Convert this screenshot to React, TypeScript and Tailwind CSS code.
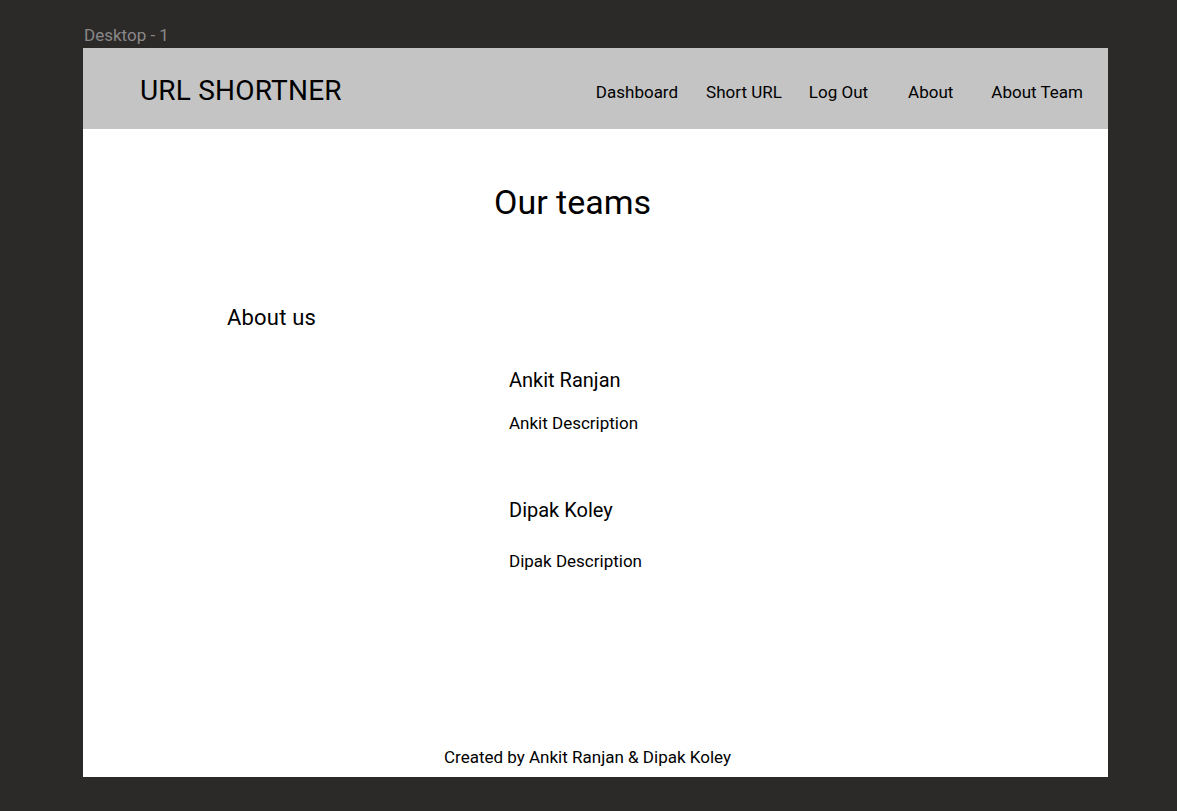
import React from 'react';

const NAV = [
  { label: 'Dashboard', cls: '' },
  { label: 'Short URL', cls: 'ml-[28px]' },
  { label: 'Log Out', cls: 'ml-[27px]' },
  { label: 'About', cls: 'ml-[40px]' },
  { label: 'About Team', cls: 'ml-[38px]' },
];

const TEAM = [
  { name: 'Ankit Ranjan', desc: 'Ankit Description', nameGap: 'mt-[34px]', descGap: 'mt-[17px]' },
  { name: 'Dipak Koley', desc: 'Dipak Description', nameGap: 'mt-[61px]', descGap: 'mt-[25px]' },
];

export default function App() {
  return (
    <div className="min-h-screen w-full bg-[#2c2929] pl-[83px] font-['Roboto',sans-serif]">
      <div className="h-[48px] flex items-end pb-[3px] pl-[1px] text-[17px] leading-[20px] text-[#8a8888]">Desktop - 1</div>

      <div className="w-[1025px] h-[729px] bg-white flex flex-col text-black">
        {/* Header */}
        <header className="h-[81px] bg-[#c4c4c4] flex items-center pl-[57px] pr-[25px]">
          <h1 className="pt-[4px] text-[28px] leading-[32px] font-normal tracking-[0.2px]">URL SHORTNER</h1>
          <nav className="ml-auto flex items-center pt-[6px] text-[17px] leading-[24px]">
            {NAV.map(n => (
              <span key={n.label} className={n.cls}>{n.label}</span>
            ))}
          </nav>
        </header>

        {/* Content */}
        <main className="flex flex-col">
          <h2 className="mt-[52px] pl-[411px] text-[34px] leading-[42px] font-normal">Our teams</h2>
          <h3 className="mt-[81px] pl-[144px] text-[22px] leading-[28px] font-normal tracking-[0.2px]">About us</h3>
          <div className="pl-[426px] flex flex-col">
            {TEAM.map(m => (
              <div key={m.name} className="flex flex-col">
                <p className={`${m.nameGap} text-[20px] leading-[28px]`}>{m.name}</p>
                <p className={`${m.descGap} text-[17px] leading-[24px]`}>{m.desc}</p>
              </div>
            ))}
          </div>
        </main>

        <footer className="mt-auto pb-[8px] pl-[361px] text-[17px] leading-[24px]">
          Created by Ankit Ranjan &amp; Dipak Koley
        </footer>
      </div>
    </div>
  );
}
